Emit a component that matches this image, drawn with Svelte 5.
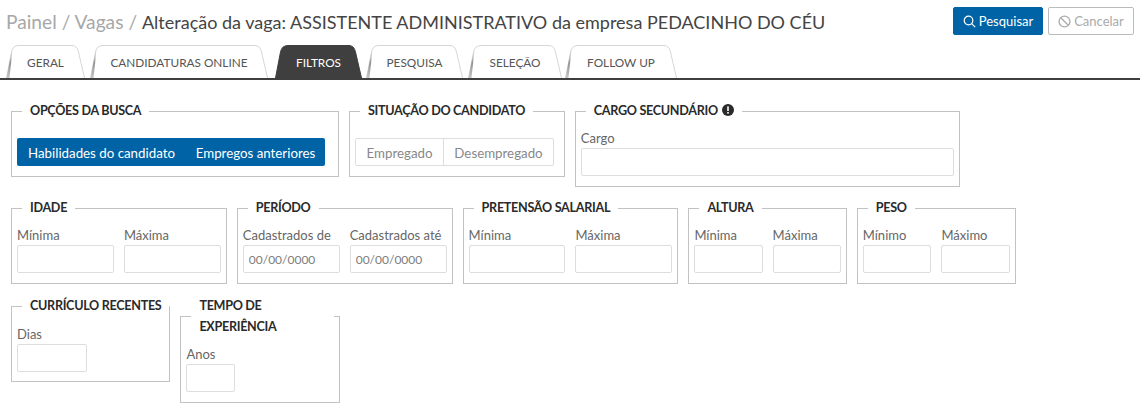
<script>
  const H = 33;
  const tabs = [
    { label: 'GERAL', width: 79, gap: 5 },
    { label: 'CANDIDATURAS ONLINE', width: 178, gap: 7 },
    { label: 'FILTROS', width: 87, gap: 4, active: true },
    { label: 'PESQUISA', width: 97, gap: 5 },
    { label: 'SELEÇÃO', width: 94, gap: 3 },
    { label: 'FOLLOW UP', width: 112, gap: 0 }
  ];
  const outline = (w) => `M0.5 ${H} L5.5 7 Q6.8 0.5 13 0.5 H${w - 13} Q${w - 8} 0.5 ${w - 6.5} 7 L${w - 0.5} ${H}`;
</script>

<div class="page">
  <header class="top">
    <h1><span class="crumb">Painel / Vagas /&nbsp;</span>Alteração da vaga: ASSISTENTE ADMINISTRATIVO da empresa PEDACINHO DO CÉU</h1>
    <div class="actions">
      <button class="btn primary">
        <svg viewBox="0 0 16 16" width="13" height="13" fill="none" stroke="currentColor" stroke-width="1.5"><circle cx="6.8" cy="6.8" r="5.3"/><path d="M10.6 10.6 15 15"/></svg>
        Pesquisar
      </button>
      <button class="btn ghost">
        <svg viewBox="0 0 16 16" width="13" height="13" fill="none" stroke="currentColor" stroke-width="1.6"><circle cx="8" cy="8" r="6.7"/><path d="M3.3 3.3 12.7 12.7"/></svg>
        Cancelar
      </button>
    </div>
  </header>

  <nav class="tabs">
    <svg width="0" height="0" class="defs"><defs><linearGradient id="streak" x1="0" y1="0" x2="0" y2="1"><stop offset="0" stop-color="#ccc" stop-opacity="0.2"/><stop offset="0.45" stop-color="#8f8f8f"/><stop offset="1" stop-color="#c8c8c8"/></linearGradient></defs></svg>
    {#each tabs as t}
      <a class="tab" class:active={t.active} style="width:{t.width}px;margin-right:{t.gap}px">
        <svg class="shape" width={t.width} height={H} viewBox="0 0 {t.width} {H}">
          <path d="{outline(t.width)} Z" class="fill" />
          <path d={outline(t.width)} class="edge" />
          {#if !t.active}<path d="M0.5 {H} L5.5 7 L6.5 5 L3.5 {H} Z" fill="url(#streak)" />{/if}
        </svg>
        <span>{t.label}</span>
      </a>
    {/each}
  </nav>

  <div class="rows">
    <div class="row">
      <fieldset class="w328">
        <legend>OPÇÕES DA BUSCA</legend>
        <div class="seg solid"><span>Habilidades do candidato</span><span>Empregos anteriores</span></div>
      </fieldset>
      <fieldset class="w216">
        <legend>SITUAÇÃO DO CANDIDATO</legend>
        <div class="seg outline"><span>Empregado</span><span>Desempregado</span></div>
      </fieldset>
      <fieldset class="w385">
        <legend>CARGO SECUNDÁRIO <svg class="info" viewBox="0 0 12 12" width="12" height="12"><circle cx="6" cy="6" r="6" fill="#2b2b2b"/><rect x="5.2" y="2.4" width="1.6" height="4.6" fill="#fff"/><rect x="5.2" y="8" width="1.6" height="1.6" fill="#fff"/></svg></legend>
        <div class="field"><label>Cargo</label><input /></div>
      </fieldset>
    </div>

    <div class="row">
      <fieldset class="w216">
        <legend>IDADE</legend>
        <div class="cols"><div class="field"><label>Mínima</label><input /></div><div class="field"><label>Máxima</label><input /></div></div>
      </fieldset>
      <fieldset class="w216">
        <legend>PERÍODO</legend>
        <div class="cols"><div class="field"><label>Cadastrados de</label><input placeholder="00/00/0000" /></div><div class="field"><label>Cadastrados até</label><input placeholder="00/00/0000" /></div></div>
      </fieldset>
      <fieldset class="w216">
        <legend>PRETENSÃO SALARIAL</legend>
        <div class="cols"><div class="field"><label>Mínima</label><input /></div><div class="field"><label>Máxima</label><input /></div></div>
      </fieldset>
      <fieldset class="w158">
        <legend>ALTURA</legend>
        <div class="cols"><div class="field"><label>Mínima</label><input /></div><div class="field"><label>Máxima</label><input /></div></div>
      </fieldset>
      <fieldset class="w159">
        <legend>PESO</legend>
        <div class="cols"><div class="field"><label>Mínimo</label><input /></div><div class="field"><label>Máximo</label><input /></div></div>
      </fieldset>
    </div>

    <div class="row last">
      <fieldset class="w159">
        <legend class="nw">CURRÍCULO RECENTES</legend>
        <div class="field dias"><label>Dias</label><input /></div>
      </fieldset>
      <fieldset class="w159">
        <legend class="tight">TEMPO DE EXPERIÊNCIA</legend>
        <div class="field anos"><label>Anos</label><input /></div>
      </fieldset>
    </div>
  </div>
</div>

<style>
  :global(body) { margin: 0; background: #fff; }
  .page { width: 1140px; height: 409px; overflow: hidden; font-family: "Lato", "Open Sans", sans-serif; color: #333; box-sizing: border-box; }
  .top { display: flex; justify-content: space-between; align-items: center; height: 44px; padding: 0 6px 2px 6px; box-sizing: border-box; }
  h1 { margin: 0; font-weight: 400; font-size: 18px; color: #444; white-space: nowrap; }
  .crumb { color: #a8a8a8; font-size: 19.2px; }
  .actions { display: flex; gap: 5px; }
  .btn { height: 28px; font: 400 13px "Lato", sans-serif; display: flex; align-items: center; justify-content: center; gap: 3px; padding: 0; border-radius: 2px; box-sizing: border-box; }
  .primary { width: 90px; background: #0063a5; border: 1px solid #0063a5; color: #fff; }
  .ghost { width: 86px; background: #fff; border: 1px solid #bbb; color: #aaa; }
  .tabs { display: flex; height: 33px; padding: 1px 0 0 6px; border-bottom: 2px solid #3f3f3f; box-sizing: content-box; }
  .defs { position: absolute; }
  .tab { position: relative; height: 33px; display: flex; align-items: center; justify-content: center; font-size: 11.8px; color: #555; flex: none; }
  .tab span { position: relative; padding-top: 2px; }
  .shape { position: absolute; left: 0; top: 0; }
  .fill { fill: #fff; stroke: none; }
  .edge { fill: none; stroke: #d6d6d6; stroke-width: 1; }
  .active { color: #fff; }
  .active .fill { fill: #3f3f3f; }
  .active .edge { stroke: #3f3f3f; }
  .rows { padding: 20px 0 0 11px; display: flex; flex-direction: column; gap: 10px; }
  .row { display: flex; gap: 10px; align-items: flex-start; }
  .last { margin-top: 1px; }
  fieldset { margin: 0; padding: 0 5px; border: 1px solid #c2c2c2; box-sizing: border-box; min-width: 0; }
  legend { margin-left: 5px; padding: 0 8px; font-size: 12.6px; letter-spacing: -0.3px; font-weight: 700; line-height: 22px; color: #2a2a2a; }
  .nw { white-space: nowrap; }
  .tight { line-height: 21px; }
  .w328 { width: 328px; } .w216 { width: 215.8px; } .w385 { width: 385px; } .w158 { width: 158.4px; } .w159 { width: 159.4px; }
  .cols { display: grid; grid-template-columns: 1fr 1fr; gap: 10px; }
  .field { padding-bottom: 10px; padding-top: 6px; }
  .dias { padding-top: 7px; padding-bottom: 9px; }
  .anos { padding-top: 7px; }
  label { display: block; font-size: 13px; line-height: 20px; color: #666; }
  input { display: block; width: 100%; height: 28px; box-sizing: border-box; border: 1px solid #ddd; border-radius: 2px; padding: 0 5px; font: 12px "Lato", sans-serif; color: #666; outline: 0; }
  input::placeholder { color: #7d7d7d; opacity: 1; }
  .dias input { width: 70px; }
  .anos input { width: 49px; }
  .seg { display: flex; height: 28px; margin: 16px 0 10px; font-size: 13.3px; border-radius: 2px; }
  .seg span { display: flex; align-items: center; justify-content: center; padding-top: 1px; box-sizing: border-box; }
  .solid { background: #0063a5; color: #fff; width: 308px; }
  .solid span:first-child { width: 169px; } .solid span:last-child { flex: 1; }
  .outline { border: 1px solid #ddd; box-sizing: border-box; color: #888; width: 199px; }
  .outline span:first-child { width: 88px; border-right: 1px solid #ddd; } .outline span:last-child { flex: 1; }
  .info { vertical-align: -1px; margin-left: 1px; }
</style>
